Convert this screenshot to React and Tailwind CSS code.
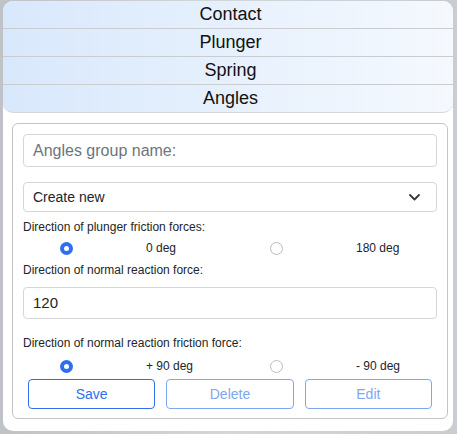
const sections = ["Contact", "Plunger", "Spring", "Angles"];

const Radio = ({ checked }) =>
  checked ? (
    <span className="w-[13px] h-[13px] rounded-full bg-[#2f6fed] flex items-center justify-center shrink-0">
      <span className="w-[5px] h-[5px] rounded-full bg-white" />
    </span>
  ) : (
    <span className="block w-[13px] h-[13px] rounded-full border border-[#b8bcc2] bg-white shrink-0" />
  );

const RadioRow = ({ left, right }) => (
  <div className="grid grid-cols-2 h-[18px] items-center text-[12px] text-[#212529]">
    <div className="flex items-center">
      <span className="ml-[37px]"><Radio checked /></span>
      <span className="ml-[73px]">{left}</span>
    </div>
    <div className="flex items-center">
      <span className="ml-[40px]"><Radio /></span>
      <span className="ml-[73px]">{right}</span>
    </div>
  </div>
);

export default function App() {
  return (
    <div
      className="min-h-screen bg-gradient-to-r from-[#bfc3c8] via-[#d3d6d9] to-[#c9ccd0] pl-[3px] pr-[4px] pt-px"
      style={{ fontFamily: '"Liberation Sans", Arial, sans-serif' }}
    >
      <div className="bg-white rounded-[10px] h-[430px] flex flex-col">
        <div className="rounded-[10px] overflow-hidden bg-gradient-to-r from-[#d8e8fc] to-[#f5f9fe] border-b border-[#d4d8dc]">
          {sections.map((s, i) => (
            <div
              key={s}
              className={`flex items-center justify-center pl-[5px] text-[18px] text-[#111] ${
                i < sections.length - 1 ? "h-[28px] border-b border-[#c9cdd2]" : "h-[27px]"
              }`}
            >
              {s}
            </div>
          ))}
        </div>

        <div className="ml-[9px] mr-[5px] mt-[10px] border border-[#c4c4c4] rounded-[6px] px-[10px] pt-[10px] pb-[9px]">
          <div className="h-[33px] border border-[#d3d7dc] rounded-[4px] flex items-center px-[9px] text-[16px] text-[#6c757d]">
            Angles group name:
          </div>

          <div className="mt-[15px] h-[30px] border border-[#d3d7dc] rounded-[4px] flex items-center justify-between pl-[9px] pr-[16px] text-[14px] text-[#212529]">
            <span>Create new</span>
            <svg width="11" height="7" viewBox="0 0 11 7" fill="none">
              <path d="M1 1l4.5 4.5L10 1" stroke="#343a40" strokeWidth="1.8" strokeLinecap="round" strokeLinejoin="round" />
            </svg>
          </div>

          <div className="mt-[6px] h-[18px] leading-[18px] text-[12px] text-[#212529]">
            Direction of plunger friction forces:
          </div>
          <div className="mt-[3px]">
            <RadioRow left="0 deg" right="180 deg" />
          </div>
          <div className="mt-[4px] h-[18px] leading-[18px] text-[12px] text-[#212529]">
            Direction of normal reaction force:
          </div>

          <div className="mt-[8px] h-[32px] border border-[#d3d7dc] rounded-[4px] flex items-center px-[9px] text-[15px] text-[#212529]">
            120
          </div>

          <div className="mt-[15px] h-[18px] leading-[18px] text-[12px] text-[#212529]">
            Direction of normal reaction friction force:
          </div>
          <div className="mt-[5px]">
            <RadioRow left="+ 90 deg" right="- 90 deg" />
          </div>

          <div className="mt-[4px] grid grid-cols-3 gap-[11px] px-[5px]">
            <button className="h-[30px] border border-[#2f6fed] rounded-[4px] text-[14px] text-[#2f6fed]">
              Save
            </button>
            <button className="h-[30px] border border-[#7fa6f3] rounded-[4px] text-[14px] text-[#7fa6f3]">
              Delete
            </button>
            <button className="h-[30px] border border-[#7fa6f3] rounded-[4px] text-[14px] text-[#7fa6f3]">
              Edit
            </button>
          </div>
        </div>
      </div>
    </div>
  );
}
